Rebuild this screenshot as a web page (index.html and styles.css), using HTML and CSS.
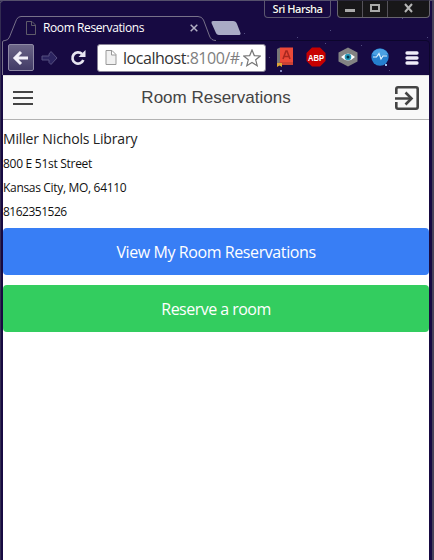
FILE: index.html
```html
<!DOCTYPE html>
<html lang="en">
<head>
<meta charset="utf-8">
<title>Room Reservations</title>
<link rel="stylesheet" href="styles.css">
</head>
<body>
<div class="window">
  <header class="chrome">
    <svg class="frame" width="434" height="75" viewBox="0 0 434 75" fill="none">
      <path d="M0 .5H434M0 3L3 .5" stroke="#55506c"/>
      <path d="M2.500 75V42Q2.500 40.500 5 40.500Q8 40.500 9.500 37L16.500 19.500Q18 16.500 21 16.500H198Q202 16.500 203.500 20L209.500 36Q211 40.500 216 40.500" stroke="#777189"/>
      <path d="M216 40.500H426Q429.500 40.500 429.500 44V75" stroke="#0c062c"/>
      <path d="M213 21H233Q236 21 237 24L240.500 33Q241 35 238.500 35H219Q216.500 35 215.500 32L211.500 23Q211 21 213 21Z" fill="#a9abc5"/>
      <g fill="#514c80"><path d="M394 17h1v1h-1zM402 18h1v1h-1zM330 30h1v1h-1zM244 33h1v1h-1zM325 43h1v1h-1zM427 37h1v1h-1zM361 45h1v1h-1zM269 57h1v1h-1zM297 37h1v1h-1zM389 70h1v1h-1z"/></g>
    </svg>
    <div class="titlebar">
      <div class="user"><span>Sri Harsha</span></div>
      <div class="controls">
        <span class="control"><svg width="12" height="12"><path d="M1 8h10v3H1z" fill="#aaa"/></svg></span>
        <span class="control"><svg width="12" height="12"><path d="M2 4h8v6H2z" fill="none" stroke="#aaa" stroke-width="2"/></svg></span>
        <span class="control close"><svg width="12" height="12"><path d="M2 3l7 8M9 3L2 11" stroke="#b5b5b5" stroke-width="2"/></svg></span>
      </div>
    </div>
    <div class="tab">
      <svg width="10" height="14" fill="none"><path d="M.5 .5H6L9.500 4V13.500H.5zM5.500 .5V4.500H9.500" stroke="#5f5b6a"/></svg>
      <span class="tab-title">Room Reservations</span>
      <svg class="tab-close" width="8" height="8"><path d="M.7 .7l6.600 6.600M7.300 .7L.7 7.300" stroke="#b3b0c4" stroke-width="1.500"/></svg>
    </div>
    <div class="toolbar">
      <span class="back"><svg width="18" height="16" viewBox="0 0 18 16" fill="none" stroke="#f3f1fa" stroke-width="3"><path d="M3 8H16M9 2L3 8L9 14"/></svg></span>
      <svg class="forward" width="17" height="16" viewBox="0 0 17 16"><path d="M1 6H8V4L10 1.500L16 8L10 14.500L8 12.500V10H1Z" fill="#2c2460" stroke="#565080"/></svg>
      <svg class="reload" width="17" height="16" viewBox="0 0 17 16"><path d="M13.300 10A5.600 5.600 0 1 1 12 4" fill="none" stroke="#e7e5f1" stroke-width="2.700"/><path d="M15.500 0V7H8.500Z" fill="#e7e5f1"/></svg>
      <div class="address">
        <svg class="doc" width="12" height="15" fill="#f1f1f1"><path d="M1 .5H7L11 4.500V14.500H1zM6.500 .5V5H11" stroke="#999"/></svg>
        <span class="url"><b>localhost</b>:8100/#,</span>
        <svg class="star" width="18" height="18" viewBox="0 0 18 18"><path d="M9 1L11.300 6.600L17.300 7L12.700 10.800L14.200 16.700L9 13.500L3.800 16.700L5.300 10.800L.7 7L6.700 6.600Z" fill="#fff" stroke="#777" stroke-width="1.200"/></svg>
      </div>
      <div class="extensions">
        <svg width="20" height="28" viewBox="0 0 20 28"><path d="M3 5L6 3.500V20L3 22Z" fill="#777"/><path d="M6 3.500H19V19H6Z" fill="#ec4938"/><path d="M6 18H19V21H3Z" fill="#cc4133"/><path d="M3 19H8V23L5.500 21.500L3 23Z" fill="#dba535"/><path d="M9 15L12 7H13L16 15M10 12.500H15" fill="none" stroke="#a9281f" stroke-width="1.600"/><path d="M6 26h2v2H6z" fill="#8285ba"/></svg>
        <svg width="20" height="20" viewBox="0 0 20 20"><path d="M6 .5H14L19.500 6V14L14 19.500H6L.5 14V6Z" fill="#c70000"/><text x="10" y="13.500" text-anchor="middle" class="abp" textLength="16" lengthAdjust="spacingAndGlyphs">ABP</text></svg>
        <svg width="20" height="20" viewBox="0 0 20 20"><path d="M10 .5L19.500 5.500V14.500L10 19.500L.5 14.500V5.500Z" fill="#838383"/><path d="M3 10Q10 3 17 10Q10 17 3 10Z" fill="#fff"/><circle cx="10" cy="10" r="3.300" fill="#2699b8"/><circle cx="10" cy="10" r="1.500" fill="#073447"/></svg>
        <svg width="18" height="20" viewBox="0 0 18 20"><circle cx="9" cy="10" r="8.700" fill="#257fce"/><path d="M1 7A9 9 0 0 1 17 7Q9 11 1 7Z" fill="#4ba1e3"/><path d="M2 10H5.500L8 6.500L10 12L12 9H16" fill="none" stroke="#dff3ff" stroke-width="1.200"/><path d="M14 17h2v2h-2z" fill="#9ac0ee"/></svg>
        <svg width="14" height="16" viewBox="0 0 14 16"><path d="M2 3H12M2 8H12M2 13H12" stroke="#efedf8" stroke-width="3.300" stroke-linecap="round"/></svg>
      </div>
    </div>
  </header>
  <main class="page">
    <div class="app-bar">
      <svg class="menu" width="20" height="16"><path d="M0 2H20M0 8H20M0 14H20" stroke="#444" stroke-width="2"/></svg>
      <h1>Room Reservations</h1>
      <svg class="exit" width="26" height="26" viewBox="0 0 26 26" fill="none" stroke="#444" stroke-width="2.600"><path d="M2.300 9V4Q2.300 2.300 4 2.300H22Q23.700 2.300 23.700 4V22Q23.700 23.700 22 23.700H4Q2.300 23.700 2.300 22V17M1 13.500H17"/><path d="M11.500 7.500L17.500 13.500L11.500 19.500"/></svg>
    </div>
    <section class="details">
      <h2>Miller Nichols Library</h2>
      <p class="street">800 E 51st Street</p>
      <p class="city">Kansas City, MO, 64110</p>
      <p class="phone">8162351526</p>
    </section>
    <button class="button view"><span>View My Room Reservations</span></button>
    <button class="button reserve"><span>Reserve a room</span></button>
  </main>
</div>
</body>
</html>
```

FILE: styles.css
```css
* { box-sizing: border-box; }
body { margin: 0; font-family: "Open Sans", "Noto Sans", sans-serif; }
svg { display: block; flex: none; }
.window {
  width: 434px; height: 560px; overflow: hidden; display: flex; flex-direction: column;
  background: #170a42; padding: 0 5px 0 3px;
  box-shadow: inset -2px 0 #454158, inset 1px 0 #332c51;
}
.chrome { height: 75px; flex: none; position: relative; }
.frame { position: absolute; left: -3px; top: 0; }
.titlebar, .tab, .toolbar { position: relative; display: flex; }
.titlebar { height: 18px; justify-content: flex-end; gap: 6px; margin-right: -1px; }
.user {
  width: 67px; border: 1px solid #5c5770; border-top: 0; border-radius: 0 0 4px 4px;
  color: #f5f5f5; font: 600 11px/18px "Open Sans", sans-serif; text-align: center;
  white-space: nowrap; letter-spacing: -.5px; text-shadow: 0 0 2px #000;
}
.controls { width: 93px; display: flex; background: #181719; border: 1px solid #686570; border-top-color: #292638; border-radius: 0 0 4px 4px; }
.control { width: 25px; display: flex; justify-content: center; padding-top: 0; border-right: 1px solid #55525a; }
.close { flex: 1; border: 0; }
.tab { height: 22px; padding: 3px 0 0 23px; }
.tab-title { margin-left: 7px; width: 145px; color: #fff; font-size: 12px; line-height: 14px; letter-spacing: -.4px; white-space: nowrap; }
.tab .tab-close { margin: 3px 0 0 2px; }
.toolbar { height: 35px; padding: 4px 0 0 5px; }
.back { width: 26px; height: 27px; display: flex; align-items: center; justify-content: center; background: linear-gradient(#6b6587, #423b66); border: 1px solid #8e89a4; border-radius: 2px; }
.forward { margin: 6px 0 0 7px; }
.reload { margin: 6px 0 0 12px; }
.address { width: 169px; height: 28px; margin-left: 10px; display: flex; background: #fff; border: 1px solid #888397; border-radius: 3px; }
.doc { margin: 5px 0 0 7px; }
.url { width: 120px; margin-left: 6px; color: #808080; font: 16px/26px "Open Sans", sans-serif; letter-spacing: -.46px; white-space: nowrap; }
.url b { color: #333; font-weight: 400; }
.star { margin: 4px 0 0 0; }
.extensions { display: flex; margin-left: 8px; }
.extensions svg:nth-child(2) { margin: 3px 0 0 12px; }
.extensions svg:nth-child(3) { margin: 3px 0 0 12px; }
.extensions svg:nth-child(4) { margin: 3px 0 0 13px; }
.extensions svg:nth-child(5) { margin: 6px 0 0 16px; }
.abp { fill: #fff; font: bold 9px "Liberation Sans", sans-serif; }
.page { flex: 1; background: #fff; color: #222; }
.app-bar { height: 45px; display: flex; align-items: center; justify-content: space-between; padding: 0 9px 0 10px; background: #f8f8f8; border-top: 1px solid #ddd; border-bottom: 1px solid #b2b2b2; }
.menu { margin-top: 1px; }
.app-bar h1 { margin: 0 0 0 5px; color: #444; font: 17px/43px "Liberation Sans", sans-serif; }
.details { height: 108px; padding-top: 7px; }
.details h2 { margin: 0; font: 500 14px/24px "Open Sans", sans-serif; letter-spacing: -.15px; white-space: nowrap; }
.details p { margin: 0; font: 12px/26px "Open Sans", sans-serif; height: 24px; color: #111; white-space: nowrap; }
.street { letter-spacing: -.28px; }
.city { letter-spacing: -.32px; }
.details .phone { letter-spacing: -.5px; }
.button { display: block; width: 100%; height: 47px; margin: 0 0 10px; padding: 2px 0 0; border: 0; border-radius: 4px; color: #fff; font: 16px/45px "Open Sans", sans-serif; white-space: nowrap; }
.view { background: #387ef5; letter-spacing: -.41px; }
.reserve { background: #33cd5f; letter-spacing: -.53px; }
```
